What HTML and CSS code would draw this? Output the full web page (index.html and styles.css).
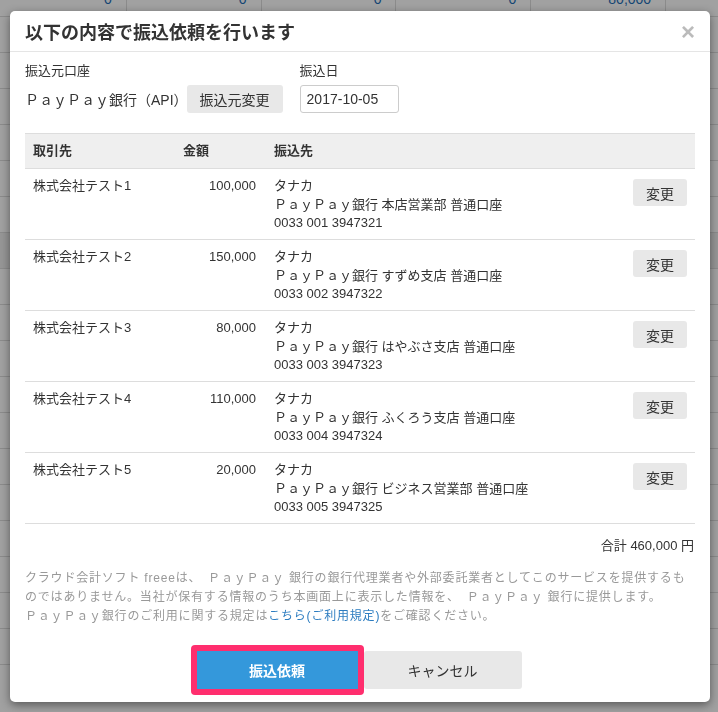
FILE: index.html
```html
<!DOCTYPE html>
<html lang="ja">

<head>
    <meta charset="UTF-8">
    <meta name="viewport" content="width=device-width, initial-scale=1.0">
    <title>振込依頼</title>
    <link rel="stylesheet" href="styles.css">
</head>

<body>
    <!-- page behind the dialog -->
    <div class="page">
        <table class="bg-table">
            <tr><td>0</td><td>0</td><td>0</td><td>0</td><td>80,000</td><td></td></tr>
            <tr><td></td><td></td><td></td><td></td><td></td><td></td></tr>
            <tr><td></td><td></td><td></td><td></td><td></td><td></td></tr>
            <tr><td></td><td></td><td></td><td></td><td></td><td></td></tr>
            <tr><td></td><td></td><td></td><td></td><td></td><td></td></tr>
            <tr><td></td><td></td><td></td><td></td><td></td><td></td></tr>
            <tr><td></td><td></td><td></td><td></td><td></td><td></td></tr>
            <tr class="shade"><td></td><td></td><td></td><td></td><td></td><td></td></tr>
            <tr><td></td><td></td><td></td><td></td><td></td><td></td></tr>
            <tr><td></td><td></td><td></td><td></td><td></td><td></td></tr>
            <tr><td></td><td></td><td></td><td></td><td></td><td></td></tr>
            <tr><td></td><td></td><td></td><td></td><td></td><td></td></tr>
            <tr><td></td><td></td><td></td><td></td><td></td><td></td></tr>
            <tr><td></td><td></td><td></td><td></td><td></td><td></td></tr>
            <tr><td></td><td></td><td></td><td></td><td></td><td></td></tr>
            <tr><td></td><td></td><td></td><td></td><td></td><td></td></tr>
            <tr><td></td><td></td><td></td><td></td><td></td><td></td></tr>
            <tr><td></td><td></td><td></td><td></td><td></td><td></td></tr>
            <tr><td></td><td></td><td></td><td></td><td></td><td></td></tr>
        </table>
    </div>
    <div class="backdrop"></div>

    <div class="modal">
        <div class="modal-header">
            <h2>以下の内容で振込依頼を行います</h2>
            <span class="close">&times;</span>
        </div>

        <div class="modal-body">
            <div class="source">
                <div class="field">
                    <label>振込元口座</label>
                    <div class="field-row">
                        <span class="account">ＰａｙＰａｙ銀行（API）</span>
                        <button class="btn">振込元変更</button>
                    </div>
                </div>
                <div class="field">
                    <label>振込日</label>
                    <div class="field-row">
                        <input class="date" type="text" value="2017-10-05">
                    </div>
                </div>
            </div>

            <table class="transfers">
                <thead>
                    <tr>
                        <th class="col-name">取引先</th>
                        <th class="col-amount">金額</th>
                        <th class="col-dest">振込先</th>
                        <th class="col-action"></th>
                    </tr>
                </thead>
                <tbody>
                    <tr>
                        <td>株式会社テスト1</td>
                        <td class="num">100,000</td>
                        <td>タナカ<br>ＰａｙＰａｙ銀行 本店営業部 普通口座<br>0033 001 3947321</td>
                        <td class="action"><button class="btn btn-small">変更</button></td>
                    </tr>
                    <tr>
                        <td>株式会社テスト2</td>
                        <td class="num">150,000</td>
                        <td>タナカ<br>ＰａｙＰａｙ銀行 すずめ支店 普通口座<br>0033 002 3947322</td>
                        <td class="action"><button class="btn btn-small">変更</button></td>
                    </tr>
                    <tr>
                        <td>株式会社テスト3</td>
                        <td class="num">80,000</td>
                        <td>タナカ<br>ＰａｙＰａｙ銀行 はやぶさ支店 普通口座<br>0033 003 3947323</td>
                        <td class="action"><button class="btn btn-small">変更</button></td>
                    </tr>
                    <tr>
                        <td>株式会社テスト4</td>
                        <td class="num">110,000</td>
                        <td>タナカ<br>ＰａｙＰａｙ銀行 ふくろう支店 普通口座<br>0033 004 3947324</td>
                        <td class="action"><button class="btn btn-small">変更</button></td>
                    </tr>
                    <tr>
                        <td>株式会社テスト5</td>
                        <td class="num">20,000</td>
                        <td>タナカ<br>ＰａｙＰａｙ銀行 ビジネス営業部 普通口座<br>0033 005 3947325</td>
                        <td class="action"><button class="btn btn-small">変更</button></td>
                    </tr>
                </tbody>
            </table>

            <div class="total">合計 460,000 円</div>

            <p class="notice">
                クラウド会計ソフト freeeは、　ＰａｙＰａｙ 銀行の銀行代理業者や外部委託業者としてこのサービスを提供するものではありません。当社が保有する情報のうち本画面上に表示した情報を、　ＰａｙＰａｙ 銀行に提供します。<br>ＰａｙＰａｙ銀行のご利用に関する規定は<a href="#">こちら(ご利用規定)</a>をご確認ください。
            </p>
        </div>

        <div class="modal-footer">
            <span class="highlight"><button class="btn btn-primary">振込依頼</button></span>
            <button class="btn btn-cancel">キャンセル</button>
        </div>
    </div>
</body>

</html>
```

FILE: styles.css
```css
body {
    margin: 0;
    background: white;
    font-family: "Liberation Sans", "Noto Sans CJK JP", sans-serif;
    color: #333;
    font-size: 13px;
}

.page {
    overflow: hidden;
    height: 712px;
}

.bg-table {
    table-layout: fixed;
    width: 810px;
    border-collapse: collapse;
    margin-top: -20px;
    margin-left: -9px;
}

.bg-table td {
    height: 35px;
    padding: 0 14px 0 2px;
    border: 1px solid #ddd;
    text-align: right;
    color: #1f6fb8;
    font-size: 14px;
}

.bg-table tr.shade td {
    background: #eee;
}

.backdrop {
    position: fixed;
    inset: 0;
    background: rgba(0, 0, 0, 0.37);
}

.modal {
    position: absolute;
    left: 10px;
    top: 11px;
    width: 700px;
    height: 691px;
    background: white;
    border-radius: 5px;
    box-shadow: 0 3px 10px rgba(0, 0, 0, 0.45);
    display: flex;
    flex-direction: column;
}

.modal-header {
    height: 40px;
    padding: 0 15px;
    border-bottom: 1px solid #e5e5e5;
    display: flex;
    align-items: center;
    justify-content: space-between;
}

.modal-header h2 {
    margin: 0;
    font-size: 18px;
    font-weight: bold;
    color: #333;
}

.close {
    font-size: 24px;
    font-weight: bold;
    color: #bbb;
    line-height: 1;
    margin-top: 1px;
}

.modal-body {
    padding: 10px 15px 0;
}

.source {
    display: flex;
    gap: 17px;
}

.field label {
    display: block;
    line-height: 18px;
    margin-bottom: 5px;
}

.field-row {
    display: flex;
    align-items: center;
}

.account {
    font-size: 14px;
    margin-right: -1px;
}

.btn {
    font-family: inherit;
    border: none;
    border-radius: 3px;
    background: #e8e8e8;
    color: #333;
    font-size: 14px;
    cursor: pointer;
}

.field-row .btn {
    height: 28px;
    padding: 0 13px;
}

.date {
    width: 99px;
    height: 28px;
    box-sizing: border-box;
    border: 1px solid #ccc;
    border-radius: 3px;
    padding: 0 6px;
    font-family: inherit;
    font-size: 14px;
    color: #333;
}

.transfers {
    width: 100%;
    margin-top: 20px;
    border-collapse: collapse;
    border-top: 1px solid #ddd;
}

.transfers th {
    background: #efefef;
    text-align: left;
    font-weight: bold;
    line-height: 18px;
    padding: 8px 8px;
    border-bottom: 1px solid #ddd;
}

.transfers td {
    vertical-align: top;
    line-height: 18.5px;
    padding: 8px 8px 6.5px;
    border-bottom: 1px solid #ddd;
}

.transfers .col-name {
    width: 134px;
}

.transfers .col-amount {
    width: 75px;
}

.transfers .col-action {
    width: 60px;
}

.transfers td.num {
    text-align: right;
    padding-right: 10px;
}

.transfers td.action {
    text-align: right;
    padding-top: 10px;
}

.btn-small {
    width: 54px;
    height: 27px;
}

.total {
    text-align: right;
    margin-top: 13px;
    line-height: 18px;
    padding-right: 1px;
}

.notice {
    margin: 14px 0 0;
    font-size: 12px;
    line-height: 19px;
    letter-spacing: 0.8px;
    color: #999;
}

.notice a {
    color: #2c7cc0;
    text-decoration: none;
}

.modal-footer {
    margin-top: auto;
    padding: 0 8px 7px 0;
    display: flex;
    justify-content: center;
    align-items: center;
}

.highlight {
    display: inline-flex;
    padding: 6px;
    background: #ff2e6e;
    border-radius: 4px;
}

.btn-primary {
    width: 161px;
    height: 38px;
    border-radius: 0;
    background: #3498db;
    color: white;
    font-weight: bold;
}

.btn-cancel {
    width: 158px;
    height: 38px;
}
```
